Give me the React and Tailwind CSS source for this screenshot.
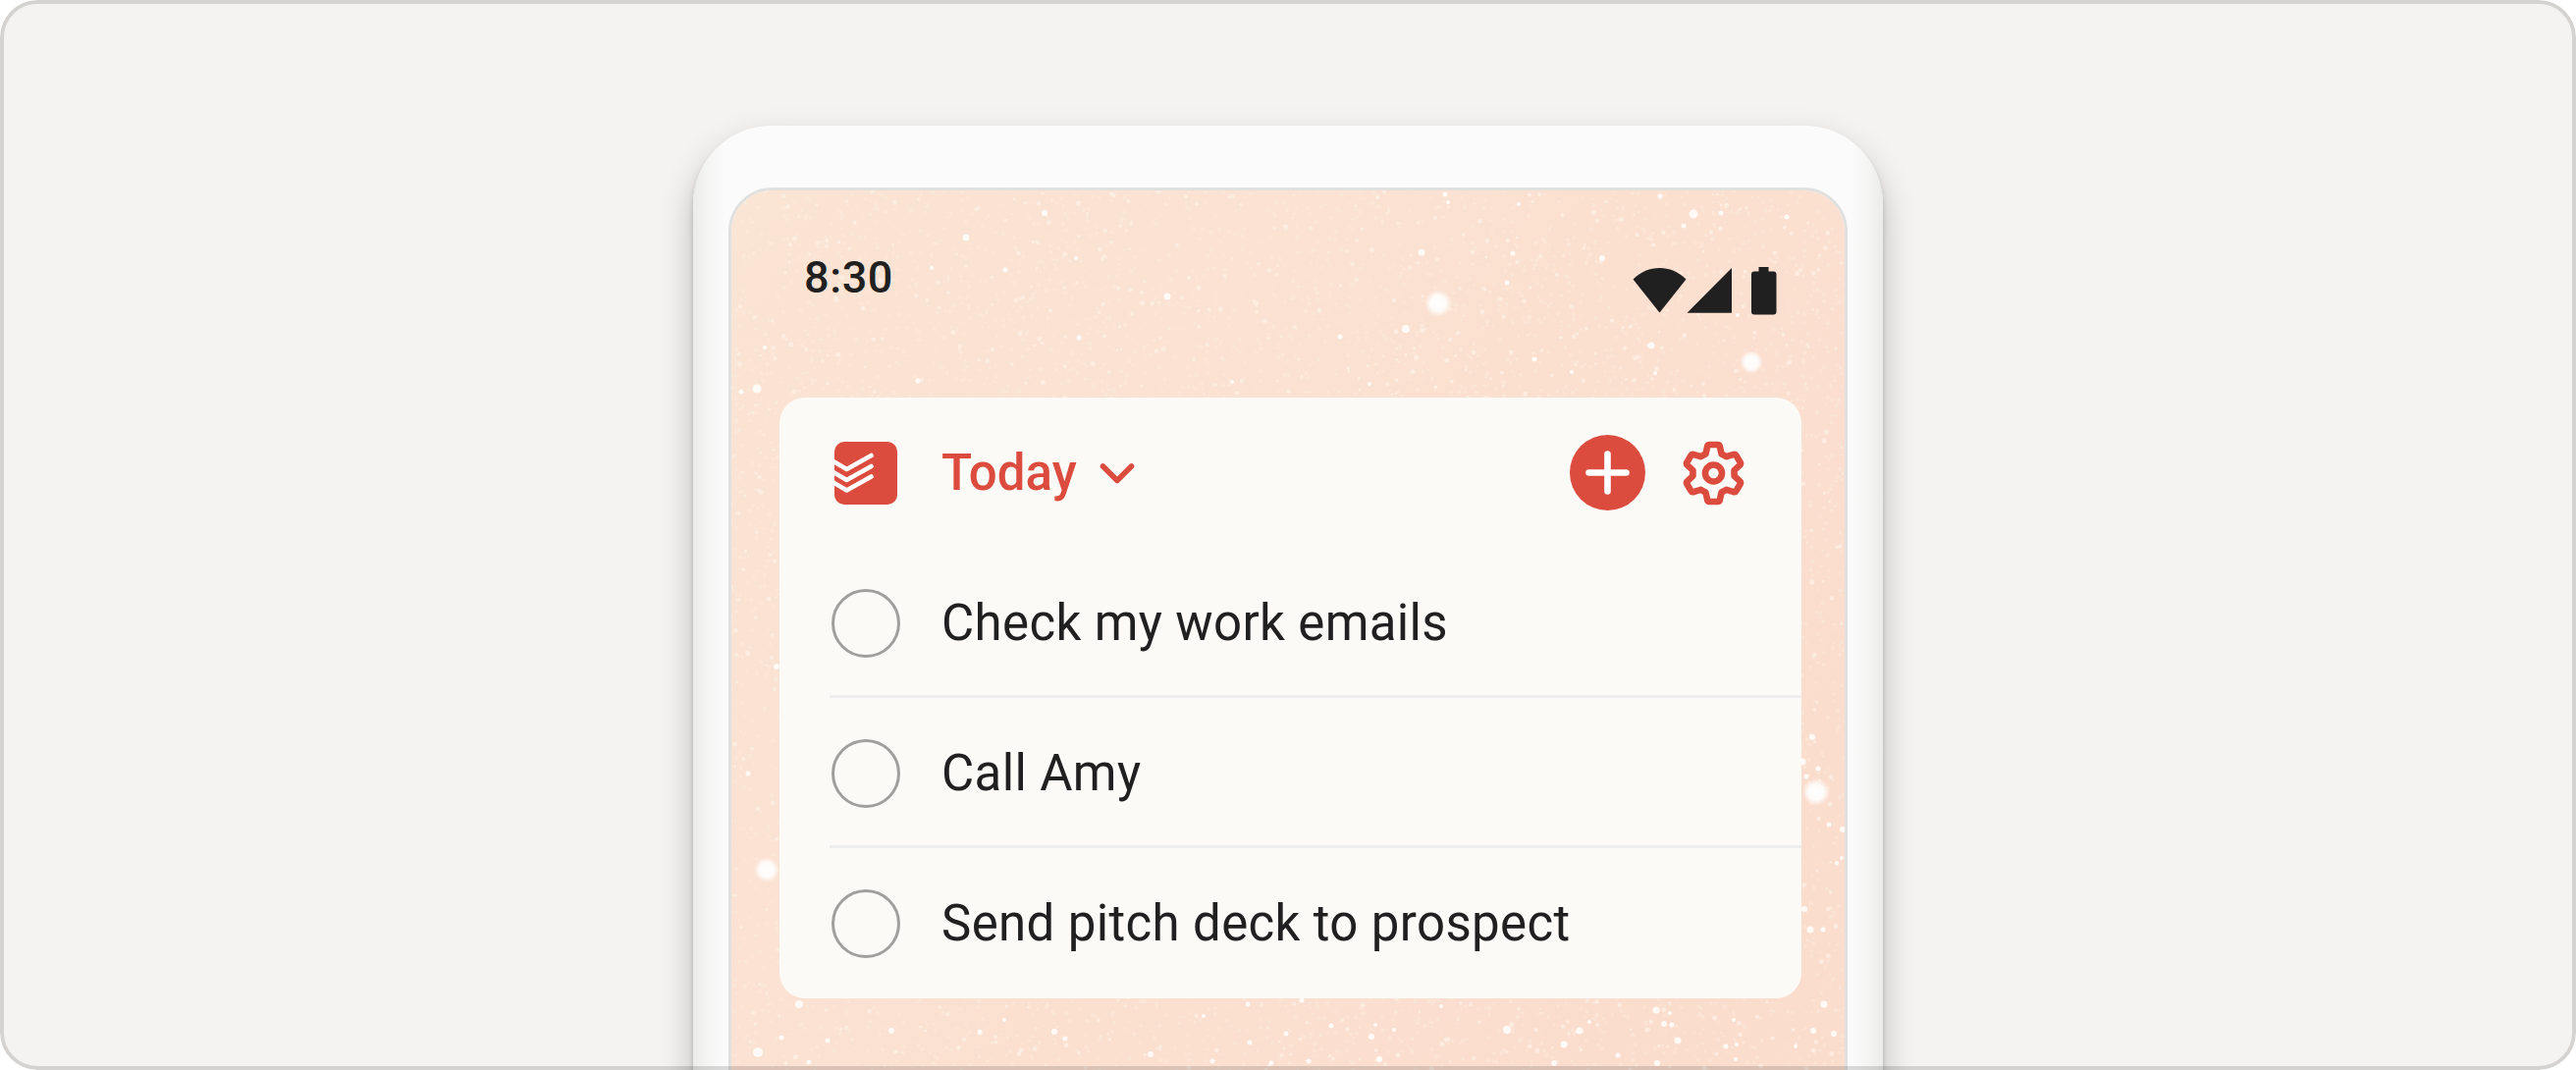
const tasks = ["Check my work emails", "Call Amy", "Send pitch deck to prospect"];

// [x, y, r] of the brighter flecks on the wallpaper
const flecks = [
  [239, 48, 3.5], [26, 202, 4.5], [10, 205, 2.5], [319, 23, 3], [279, 81, 2.5], [190, 194, 2.5], [34, 160, 2], [204, 79, 2],
  [980, 24, 4.5], [970, 36, 2.5], [1008, 23, 2.5], [946, 6, 2.5], [1075, 27, 2.5], [887, 69, 3], [937, 158, 3.5], [941, 186, 2],
  [818, 172, 2.5], [802, 14, 2], [1025, 127, 2], [856, 185, 2], [703, 63, 3.5], [687, 141, 4], [444, 108, 3.5], [620, 149, 2.5],
  [354, 150, 2.5], [351, 69, 2], [727, 4, 2.5], [730, 12, 2], [796, 64, 2.5], [790, 94, 2.5], [650, 197, 2], [510, 195, 2],
  [17, 594, 2.5], [69, 829, 4], [51, 863, 2.5], [27, 878, 5], [79, 888, 2.5], [98, 866, 2.5], [46, 485, 3],
  [1101, 557, 3], [1091, 582, 3.5], [1107, 589, 2.5], [1095, 597, 2.5], [1118, 646, 2.5], [1132, 651, 3], [1131, 680, 2],
  [1126, 685, 2], [1093, 732, 3], [1099, 753, 3.5], [1112, 753, 2.5], [1113, 829, 3.5], [1102, 856, 3], [1123, 859, 3],
  [163, 856, 3], [253, 857, 2.5], [278, 845, 2], [329, 857, 3], [340, 864, 2.5], [427, 880, 3], [526, 829, 2.5], [481, 841, 2],
  [490, 887, 2.5], [550, 889, 2.5], [588, 887, 2.5], [565, 859, 2.5], [528, 868, 2.5], [581, 825, 2.5], [611, 851, 2.5],
  [652, 862, 3], [656, 850, 2], [660, 885, 3], [723, 831, 2], [675, 855, 2], [790, 855, 4], [864, 856, 3.5], [848, 870, 3.5],
  [838, 889, 3], [874, 847, 2], [903, 881, 2.5], [942, 835, 3.5], [950, 849, 3], [958, 850, 2.5], [964, 866, 3.5],
  [943, 889, 3], [956, 838, 2], [1013, 872, 2.5], [1021, 845, 2], [1024, 870, 2], [1023, 885, 2], [1084, 872, 2],
];

const glows = [
  [720, 115, 14], [1039, 175, 12], [36, 692, 13], [1105, 613, 14],
];

function makeDust(count, seed, minR, maxR) {
  let s = seed;
  const rand = () => {
    s = (s * 16807) % 2147483647;
    return s / 2147483647;
  };
  let d = "";
  for (let i = 0; i < count; i++) {
    const x = (rand() * 1134).toFixed(1);
    const y = (rand() * 896).toFixed(1);
    const r = (minR + rand() * (maxR - minR)).toFixed(2);
    d += `M${x} ${y}m-${r} 0a${r} ${r} 0 1 0 ${r * 2} 0a${r} ${r} 0 1 0 -${r * 2} 0`;
  }
  return d;
}

const fineDust = makeDust(8000, 77, 1, 2.1);
const coarseDust = makeDust(1500, 4021, 1.2, 2.6);

function Wallpaper() {
  return (
    <svg className="absolute inset-0" width="1134" height="896" viewBox="0 0 1134 896">
      <defs>
        <linearGradient id="peach" x1="0" y1="0" x2="1" y2="0.55">
          <stop offset="0" stopColor="#fae4d4" />
          <stop offset="0.5" stopColor="#fbe1d1" />
          <stop offset="1" stopColor="#fbddce" />
        </linearGradient>
        <radialGradient id="glow">
          <stop offset="0" stopColor="#fff" />
          <stop offset="0.55" stopColor="#fff" stopOpacity="0.9" />
          <stop offset="1" stopColor="#fff" stopOpacity="0" />
        </radialGradient>
      </defs>
      <rect width="1134" height="896" fill="url(#peach)" />
      <path d={fineDust} fill="#fdf0e2" opacity="0.36" />
      <path d={coarseDust} fill="#fff5ec" opacity="0.55" />
      {flecks.map(([x, y, r]) => (
        <circle key={`${x}-${y}`} cx={x} cy={y} r={r} fill="#fffdfb" opacity="0.9" />
      ))}
      {glows.map(([x, y, r]) => (
        <circle key={`${x}-${y}`} cx={x} cy={y} r={r} fill="url(#glow)" />
      ))}
    </svg>
  );
}

function StatusBar() {
  return (
    <div className="relative flex h-[211px] justify-between pl-[74px] pr-[69px]">
      <span className="mt-[62px] text-[45px] leading-[54px] font-medium tracking-[0.6px]">8:30</span>
      <svg className="mt-[78px]" width="147" height="50" viewBox="0 0 147 50" fill="#202020">
        <path d="M0.5 12.5C16 -2.8 39 -2.8 54.500 12.500L27.500 46.500Z" />
        <path d="M55.500 46.800L101 1V46.800Z" />
        <path d="M128.500 0H138.500V4.500H143.500Q146.500 4.500 146.500 7.500V45.500Q146.500 48.500 143.500 48.500H124Q121 48.500 121 45.500V7.500Q121 4.500 124 4.500H128.500Z" />
      </svg>
    </div>
  );
}

function TodoistLogo() {
  return (
    <svg width="64" height="64" viewBox="0 0 64 64">
      <defs>
        <clipPath id="tile">
          <rect width="64" height="64" rx="10" />
        </clipPath>
      </defs>
      <g clipPath="url(#tile)">
        <rect width="64" height="64" fill="#dc4c3e" />
        <g fill="none" stroke="#fff" strokeWidth="4.6" strokeLinecap="round" strokeLinejoin="round">
          <path d="M-2 19.500L12.500 28L37.500 14" />
          <path d="M-2 30.500L12.500 39L37.500 25" />
          <path d="M-2 41L12.500 49.500L37.500 35.500" />
        </g>
      </g>
    </svg>
  );
}

// one tooth, repeated every 60 degrees around the centre
function gearPath() {
  const tooth = [[-8, -19.7], [-6.5, -26.5], [-6.2, -29], [-4, -29], [4, -29], [6.2, -29], [6.5, -26.5], [8, -19.7]];
  const parts = [];
  for (let i = 0; i < 6; i++) {
    const a = (i * Math.PI) / 3;
    const p = tooth.map(([x, y]) =>
      `${(x * Math.cos(a) - y * Math.sin(a)).toFixed(2)} ${(x * Math.sin(a) + y * Math.cos(a)).toFixed(2)}`
    );
    parts.push(`${i ? "L" : "M"}${p[0]}L${p[1]}Q${p[2]} ${p[3]}L${p[4]}Q${p[5]} ${p[6]}L${p[7]}`);
  }
  return parts.join("") + "Z";
}

function WidgetHeader() {
  return (
    <div className="flex h-[153px] items-center pl-14 pr-[57px] text-[#dc4c3e]">
      <TodoistLogo />
      <span className="ml-[45px] text-[51px] leading-[60px] font-medium tracking-[0.1px]">Today</span>
      <svg className="ml-[22px]" width="38" height="24" viewBox="0 0 38 24" fill="none" stroke="currentColor" strokeWidth="5.6" strokeLinecap="round" strokeLinejoin="round">
        <path d="M4.500 5L19 19.500L33.500 5" />
      </svg>
      <svg className="ml-auto" width="77" height="77" viewBox="0 0 77 77">
        <circle cx="38.5" cy="38.5" r="38.5" fill="currentColor" />
        <path d="M19.500 38.500H57.500M38.500 19.500V57.500" stroke="#fff" strokeWidth="6.600" strokeLinecap="round" />
      </svg>
      <svg className="ml-[37px]" width="65" height="66" viewBox="-32.500 -33 65 66" fill="none" stroke="currentColor" strokeWidth="6.6" strokeLinejoin="round">
        <path d={gearPath()} />
        <circle r="8.5" />
      </svg>
    </div>
  );
}

function TaskRow({ title, last }) {
  return (
    <div className={`ml-[51px] flex h-[153px] items-center border-b-[3px] pt-[3px] ${last ? "border-transparent" : "border-[#eeeeee]"}`}>
      <span className="ml-0.5 size-[70px] rounded-full border-[3px] border-[#a09f9d]" />
      <span className="ml-[42px] text-[51px] leading-[60px] tracking-[0.36px] whitespace-nowrap">{title}</span>
    </div>
  );
}

export default function App() {
  return (
    <div className="bg-white font-['Roboto',sans-serif] text-[#202020]">
      <div className="relative flex h-[1090px] w-[2624px] justify-center overflow-hidden rounded-[38px] bg-[#f4f3f1] pt-32">
        {/* Phone */}
        <div className="h-[1100px] w-[1212px] shrink-0 rounded-t-[80px] bg-[linear-gradient(to_right,#ebebea,#f4f4f3_14px,#fbfbfb_32px,#fbfbfb_1180px,#f4f4f3_1198px,#ebebea)] px-9 pt-[63px] shadow-[0_5px_6px_rgba(0,0,0,0.16),0_16px_34px_rgba(0,0,0,0.22)]">
          <div className="relative h-[1000px] overflow-hidden rounded-t-[45px] border-[3px] border-[#e0e0df]">
            <Wallpaper />
            <StatusBar />
            {/* Widget */}
            <div className="relative ml-[49px] w-[1041px] rounded-[26px] bg-[#fcfaf6]">
              <WidgetHeader />
              {tasks.map((task, i) => (
                <TaskRow key={task} title={task} last={i === tasks.length - 1} />
              ))}
            </div>
          </div>
        </div>
        {/* Frame outline, drawn over the phone */}
        <div className="pointer-events-none absolute inset-0 rounded-[38px] border-4 border-black/13" />
      </div>
    </div>
  );
}
